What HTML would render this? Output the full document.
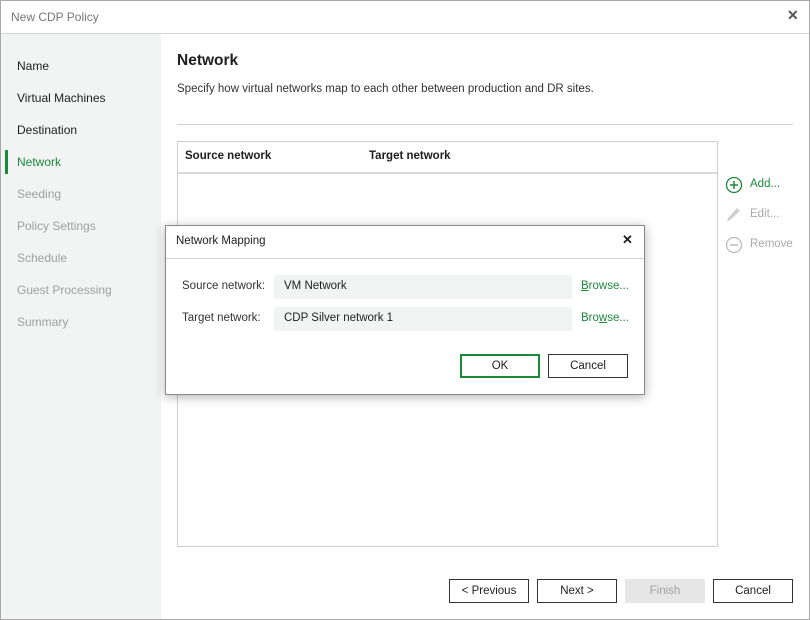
<!DOCTYPE html>
<html><head><style>
*{box-sizing:border-box;margin:0;padding:0}
body{width:810px;height:620px;position:relative;font-family:"Liberation Sans",sans-serif;font-size:11.5px;color:#1e1e1e;background:#fff;overflow:hidden}
.a{position:absolute}
.win{left:0;top:0;width:810px;height:620px;border:1px solid #a8a8a8}
.nav div{position:absolute;left:17px;font-size:12px}
.btn{position:absolute;height:24px;border:1px solid #333;background:#fff;text-align:center;line-height:22px;font-size:11.5px}
.lnk{color:#1a8a3a;text-decoration:none}
.lnk u{text-decoration:underline}
</style></head><body>
<div class="a win"></div>
<div class="a" style="left:11px;top:10px;color:#777;font-size:12px">New CDP Policy</div>
<div class="a" style="left:787px;top:7px;font-size:14px;color:#555;font-weight:bold">✕</div>
<div class="a" style="left:1px;top:33px;width:808px;height:1px;background:#d4d4d4"></div>
<div class="a" style="left:1px;top:34px;width:160px;height:585px;background:#f2f3f3"></div>
<div class="nav">
<div style="top:59px">Name</div>
<div style="top:91px">Virtual Machines</div>
<div style="top:123px">Destination</div>
<div style="top:155px;color:#1a8a3a">Network</div>
<div style="top:187px;color:#a0a0a0">Seeding</div>
<div style="top:219px;color:#a0a0a0">Policy Settings</div>
<div style="top:251px;color:#a0a0a0">Schedule</div>
<div style="top:283px;color:#a0a0a0">Guest Processing</div>
<div style="top:315px;color:#a0a0a0">Summary</div>
</div>
<div class="a" style="left:5px;top:150px;width:3px;height:24px;background:#1a8a3a"></div>
<div class="a" style="left:177px;top:52px;font-size:15.5px;font-weight:bold;color:#1e1e1e">Network</div>
<div class="a" style="left:177px;top:83px;color:#333">Specify how virtual networks map to each other between production and DR sites.</div>
<div class="a" style="left:177px;top:124px;width:616px;height:1px;background:#cfcfcf"></div>
<div class="a" style="left:177px;top:141px;width:541px;height:406px;border:1px solid #cfcfcf"></div>
<div class="a" style="left:178px;top:172px;width:539px;height:2px;background:#d8dada"></div>
<div class="a" style="left:185px;top:150px;font-weight:bold">Source network</div>
<div class="a" style="left:369px;top:150px;font-weight:bold">Target network</div>
<svg class="a" style="left:725px;top:176px" width="18" height="18"><circle cx="9" cy="9" r="7.5" fill="none" stroke="#1a8a3a" stroke-width="1.3"/><path d="M9 5v8M5 9h8" stroke="#1a8a3a" stroke-width="1.5"/></svg>
<div class="a lnk" style="left:750px;top:178px">Add...</div>
<svg class="a" style="left:725px;top:206px" width="18" height="18"><path d="M2 16l1-4 9-10 3 3-10 9z" fill="#d0d0d0"/></svg>
<div class="a" style="left:750px;top:208px;color:#a8a8a8">Edit...</div>
<svg class="a" style="left:725px;top:236px" width="18" height="18"><circle cx="9" cy="9" r="7.5" fill="none" stroke="#bbb" stroke-width="1.3"/><path d="M5 9h8" stroke="#bbb" stroke-width="1.5"/></svg>
<div class="a" style="left:750px;top:238px;color:#a8a8a8">Remove</div>
<div class="btn" style="left:449px;top:579px;width:80px">&lt; Previous</div>
<div class="btn" style="left:537px;top:579px;width:80px">Next &gt;</div>
<div class="btn" style="left:625px;top:579px;width:80px;background:#e6e6e6;border-color:#e6e6e6;color:#a0a0a0">Finish</div>
<div class="btn" style="left:713px;top:579px;width:80px">Cancel</div>
<!-- dialog -->
<div class="a" style="left:165px;top:225px;width:480px;height:170px;background:#fff;border:1px solid #8a8a8a;box-shadow:0 2px 10px rgba(0,0,0,.3)"></div>
<div class="a" style="left:176px;top:235px">Network Mapping</div>
<div class="a" style="left:622px;top:232px;font-size:13px;font-weight:bold">✕</div>
<div class="a" style="left:166px;top:258px;width:478px;height:1px;background:#d0d0d0"></div>
<div class="a" style="left:182px;top:280px;color:#333">Source network:</div>
<div class="a" style="left:182px;top:312px;color:#333">Target network:</div>
<div class="a" style="left:274px;top:275px;width:298px;height:24px;background:#f2f3f3;padding:5px 0 0 10px">VM Network</div>
<div class="a" style="left:274px;top:307px;width:298px;height:24px;background:#f2f3f3;padding:5px 0 0 10px">CDP Silver network 1</div>
<div class="a lnk" style="left:581px;top:280px"><u>B</u>rowse...</div>
<div class="a lnk" style="left:581px;top:312px">Bro<u>w</u>se...</div>
<div class="btn" style="left:460px;top:354px;width:80px;border:2px solid #1a8a3a;line-height:20px">OK</div>
<div class="btn" style="left:548px;top:354px;width:80px">Cancel</div>
</body></html>
